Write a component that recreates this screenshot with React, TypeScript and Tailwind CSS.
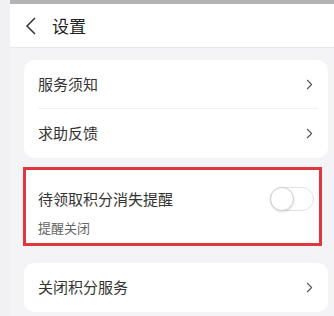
import { ChevronRight } from 'lucide-react';

const font = { fontFamily: '"Noto Sans CJK SC", "Noto Sans", sans-serif' };

function Row({ label, divider }: { label: string; divider?: boolean }) {
  return (
    <div className="relative flex h-[49px] items-center justify-between pl-[14px] pr-[10px]">
      <span className="text-[15px] text-[#333]">{label}</span>
      <ChevronRight size={17} strokeWidth={1.5} className="text-[#555]" />
      {divider && <div className="absolute bottom-0 left-[14px] right-[10px] h-px bg-[#f0f0f2]" />}
    </div>
  );
}

export default function App() {
  return (
    <div className="flex h-[316px] w-[334px] overflow-hidden bg-[#f4f4f6]" style={font}>
      <div className="w-[10px] bg-[#f1f1f3]" />
      <div className="flex flex-1 flex-col">
        <div className="h-[4px] bg-[#b3b3b3]" />
        <div className="flex h-[44px] items-center border-b border-[#e8e8ea] bg-white pl-[15px]">
          <svg width="12" height="18" viewBox="0 0 12 18" className="mr-[15px]">
            <path d="M10 1 L2 9 L10 17" fill="none" stroke="#333" strokeWidth="1.5" />
          </svg>
          <span className="text-[17px] text-[#222]">设置</span>
        </div>
        <div className="flex flex-col pl-[14px] pr-[6px] pt-[12px]">
          <div className="rounded-[10px] bg-white">
            <Row label="服务须知" divider />
            <Row label="求助反馈" />
          </div>
          <div className="mt-[9px] flex h-[79px] w-[299px] -translate-x-px flex-col border-[3px] border-[#e2363f] bg-white pl-[12px] pr-[5px] pt-[17px]">
            <div className="flex items-center justify-between">
              <span className="text-[15px] leading-[20px] text-[#333]">待领取积分消失提醒</span>
              <div className="flex h-[24px] w-[44px] items-center rounded-full border border-[#e2e2e2] bg-white">
                <div className="h-[24px] w-[24px] -ml-px rounded-full border border-[#cfcfcf] bg-white shadow-sm" />
              </div>
            </div>
            <span className="mt-[8px] text-[13px] leading-[18px] text-[#666]">提醒关闭</span>
          </div>
          <div className="mt-[17px] rounded-[10px] bg-white">
            <Row label="关闭积分服务" />
          </div>
        </div>
      </div>
    </div>
  );
}
